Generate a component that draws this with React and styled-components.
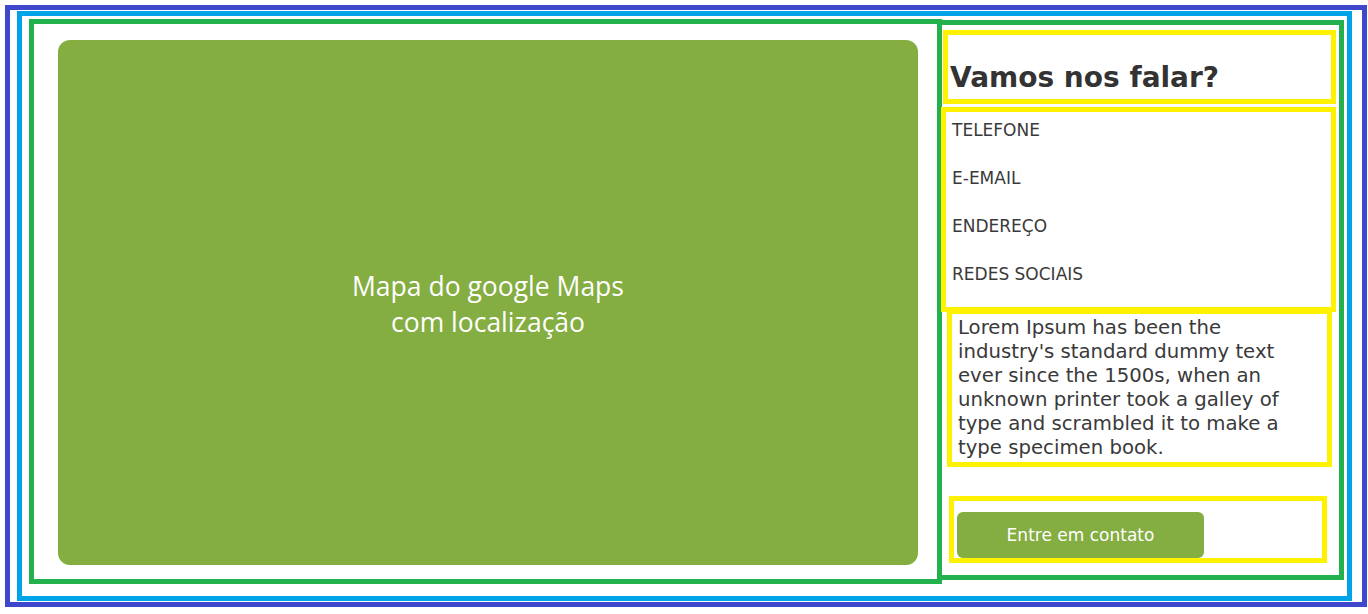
import React from "react";
import styled, { createGlobalStyle } from "styled-components";

const GlobalStyle = createGlobalStyle`
  * {
    box-sizing: border-box;
  }
  body {
    margin: 0;
    background: #ffffff;
    font-family: "DejaVu Sans", "Noto Sans", sans-serif;
  }
`;

const contactItems = ["TELEFONE", "E-EMAIL", "ENDEREÇO", "REDES SOCIAIS"];

const App = () => {
  return (
    <>
      <GlobalStyle />
      <OuterFrame>
        <InnerFrame>
          <MapColumn>
            <MapPlaceholder>
              <MapLabel>
                Mapa do google Maps
                <br />
                com localização
              </MapLabel>
            </MapPlaceholder>
          </MapColumn>
          <InfoColumn>
            <Section $ml={1} $mr={3} $mt={5} $h={74}>
              <Heading>Vamos nos falar?</Heading>
            </Section>
            <Section $ml={-1} $mr={3} $mt={3} $h={205}>
              <ContactList>
                {contactItems.map(item => (
                  <ContactItem key={item}>{item}</ContactItem>
                ))}
              </ContactList>
            </Section>
            <Section $ml={5} $mr={7} $mt={-3} $h={158}>
              <Description>
                Lorem Ipsum has been the industry's standard dummy text ever
                since the 1500s, when an unknown printer took a galley of type
                and scrambled it to make a type specimen book.
              </Description>
            </Section>
            <Section $ml={7} $mr={12} $mt={29} $h={67}>
              <ContactButton type="button">Entre em contato</ContactButton>
            </Section>
          </InfoColumn>
        </InnerFrame>
      </OuterFrame>
    </>
  );
};

export default App;

const OuterFrame = styled.div`
  margin: 5px 0 0 5px;
  width: 1362px;
  height: 602px;
  border: 5px solid #3f48cc;
  padding: 1px 10px 1px 7px;
`;

const InnerFrame = styled.div`
  display: flex;
  align-items: flex-start;
  height: 100%;
  border: 5px solid #00a2e8;
  padding: 3px 3px 0 7px;
`;

const MapColumn = styled.div`
  display: flex;
  flex: 0 0 913px;
  height: 565px;
  border: 5px solid #22b14c;
  padding: 16px 19px 14px 24px;
`;

const MapPlaceholder = styled.div`
  flex: 1;
  display: flex;
  align-items: center;
  justify-content: center;
  background: #84ad42;
  border-radius: 12px;
`;

const MapLabel = styled.p`
  margin: 2px 0 0;
  font-family: "Open Sans", sans-serif;
  font-size: 26.5px;
  line-height: 36px;
  color: #ffffff;
  text-align: center;
`;

const InfoColumn = styled.div`
  display: flex;
  flex-direction: column;
  flex: 0 0 407px;
  height: 560px;
  margin: 1px 0 0 -5px;
  border: 5px solid #22b14c;
`;

const Section = styled.div`
  height: ${props => props.$h}px;
  margin: ${props => props.$mt}px ${props => props.$mr}px 0
    ${props => props.$ml}px;
  border: 5px solid #fff200;
`;

const Heading = styled.h2`
  margin: 0;
  padding: 27px 0 0 2px;
  font-size: 28px;
  font-weight: 700;
  line-height: 32px;
  color: #333333;
`;

const ContactList = styled.ul`
  list-style: none;
  margin: 0;
  padding: 6px 0 0 6px;
`;

const ContactItem = styled.li`
  margin: 0 0 24px;
  font-size: 17px;
  line-height: 24px;
  color: #3a3a3a;
`;

const Description = styled.p`
  margin: 0;
  padding: 2px 0 0 6px;
  max-width: 356px;
  font-size: 19.7px;
  line-height: 24px;
  color: #3a3a3a;
`;

const ContactButton = styled.button`
  display: block;
  width: 247px;
  height: 46px;
  margin: 11px 0 0 3px;
  padding: 0;
  border: none;
  border-radius: 6px;
  background: #84ad42;
  font-family: "DejaVu Sans", "Noto Sans", sans-serif;
  font-size: 17px;
  color: #ffffff;
  text-align: center;
  cursor: pointer;
`;
